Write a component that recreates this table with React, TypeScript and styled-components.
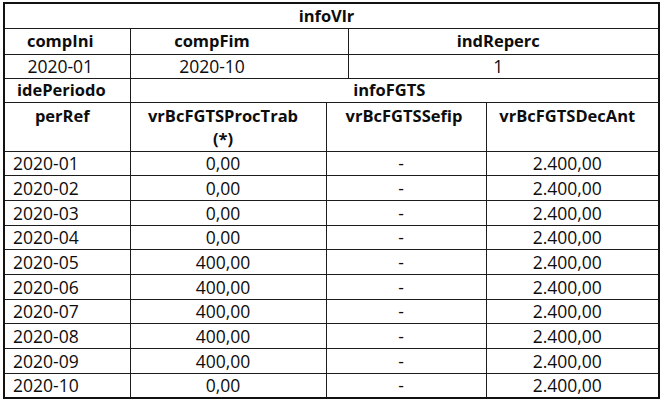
import styled, { createGlobalStyle } from 'styled-components';

const GlobalStyle = createGlobalStyle`
  html, body {
    margin: 0;
    padding: 0;
    background: #fff;
  }
  body {
    font-family: "Open Sans", "Liberation Sans", sans-serif;
    color: #0d0d0d;
  }
`;

interface Periodo {
  perRef: string
  procTrab: string
  sefip: string
  decAnt: string
}

const periodos: Periodo[] = [
  { perRef: '2020-01', procTrab: '0,00', sefip: '-', decAnt: '2.400,00' },
  { perRef: '2020-02', procTrab: '0,00', sefip: '-', decAnt: '2.400,00' },
  { perRef: '2020-03', procTrab: '0,00', sefip: '-', decAnt: '2.400,00' },
  { perRef: '2020-04', procTrab: '0,00', sefip: '-', decAnt: '2.400,00' },
  { perRef: '2020-05', procTrab: '400,00', sefip: '-', decAnt: '2.400,00' },
  { perRef: '2020-06', procTrab: '400,00', sefip: '-', decAnt: '2.400,00' },
  { perRef: '2020-07', procTrab: '400,00', sefip: '-', decAnt: '2.400,00' },
  { perRef: '2020-08', procTrab: '400,00', sefip: '-', decAnt: '2.400,00' },
  { perRef: '2020-09', procTrab: '400,00', sefip: '-', decAnt: '2.400,00' },
  { perRef: '2020-10', procTrab: '0,00', sefip: '-', decAnt: '2.400,00' },
];

const App = () => {
  return (
    <>
      <GlobalStyle />
      <Page>
        <Table>
          <colgroup>
            <col style={{ width: 126 }} />
            <col style={{ width: 196 }} />
            <col style={{ width: 22 }} />
            <col style={{ width: 138 }} />
            <col style={{ width: 173 }} />
          </colgroup>
          <tbody>
            <Row $h={25}>
              <Cell colSpan={5} $bold>infoVlr</Cell>
            </Row>
            <Row $h={26}>
              <Cell $bold $pr={14}>compIni</Cell>
              <Cell colSpan={2} $bold $pr={54}>compFim</Cell>
              <Cell colSpan={2} $bold>indReperc</Cell>
            </Row>
            <Row $h={24}>
              <Cell $pr={14}>2020-01</Cell>
              <Cell colSpan={2} $pr={54}>2020-10</Cell>
              <Cell colSpan={2}>1</Cell>
            </Row>
            <Row $h={24}>
              <Cell $align="left" $bold $pl={12}>idePeriodo</Cell>
              <Cell colSpan={4} $bold>infoFGTS</Cell>
            </Row>
            <Row $h={49}>
              <Cell $bold $top>perRef</Cell>
              <Cell $bold $top>vrBcFGTSProcTrab<br />(*)</Cell>
              <Cell colSpan={2} $bold $top $pr={4}>vrBcFGTSSefip</Cell>
              <Cell $bold $top>vrBcFGTSDecAnt</Cell>
            </Row>
            {periodos.map((p) => (
              <Row key={p.perRef} $h={24.7}>
                <Cell $align="left">{p.perRef}</Cell>
                <Cell>{p.procTrab}</Cell>
                <Cell colSpan={2} $pr={10}>{p.sefip}</Cell>
                <Cell>{p.decAnt}</Cell>
              </Row>
            ))}
          </tbody>
        </Table>
      </Page>
    </>
  );
};

const Page = styled.div`
  width: 664px;
  height: 402px;
  overflow: hidden;
  box-sizing: border-box;
  padding: 2px 0 0 3px;
`;

const Table = styled.table`
  border-collapse: collapse;
  table-layout: fixed;
  width: 655px;
  border: 2px solid #111;
`;

const Row = styled.tr<{ $h: number }>`
  height: ${(p) => p.$h}px;
`;

const Cell = styled.td<{
  $align?: 'left' | 'center'
  $bold?: boolean
  $top?: boolean
  $pr?: number
  $pl?: number
}>`
  border: 1px solid #1c1c1c;
  box-sizing: border-box;
  padding: ${(p) => (p.$top ? '1px' : '0')} ${(p) => p.$pr ?? (p.$align === 'left' ? 0 : 10)}px 0
    ${(p) => p.$pl ?? (p.$align === 'left' ? 8 : 0)}px;
  text-align: ${(p) => p.$align ?? 'center'};
  vertical-align: ${(p) => (p.$top ? 'top' : 'middle')};
  font-size: ${(p) => (p.$bold ? 16.5 : 17.5)}px;
  font-weight: ${(p) => (p.$bold ? 700 : 400)};
  line-height: ${(p) => (p.$top ? 23 : 20)}px;
  white-space: nowrap;
  overflow: hidden;
`;

export default App
